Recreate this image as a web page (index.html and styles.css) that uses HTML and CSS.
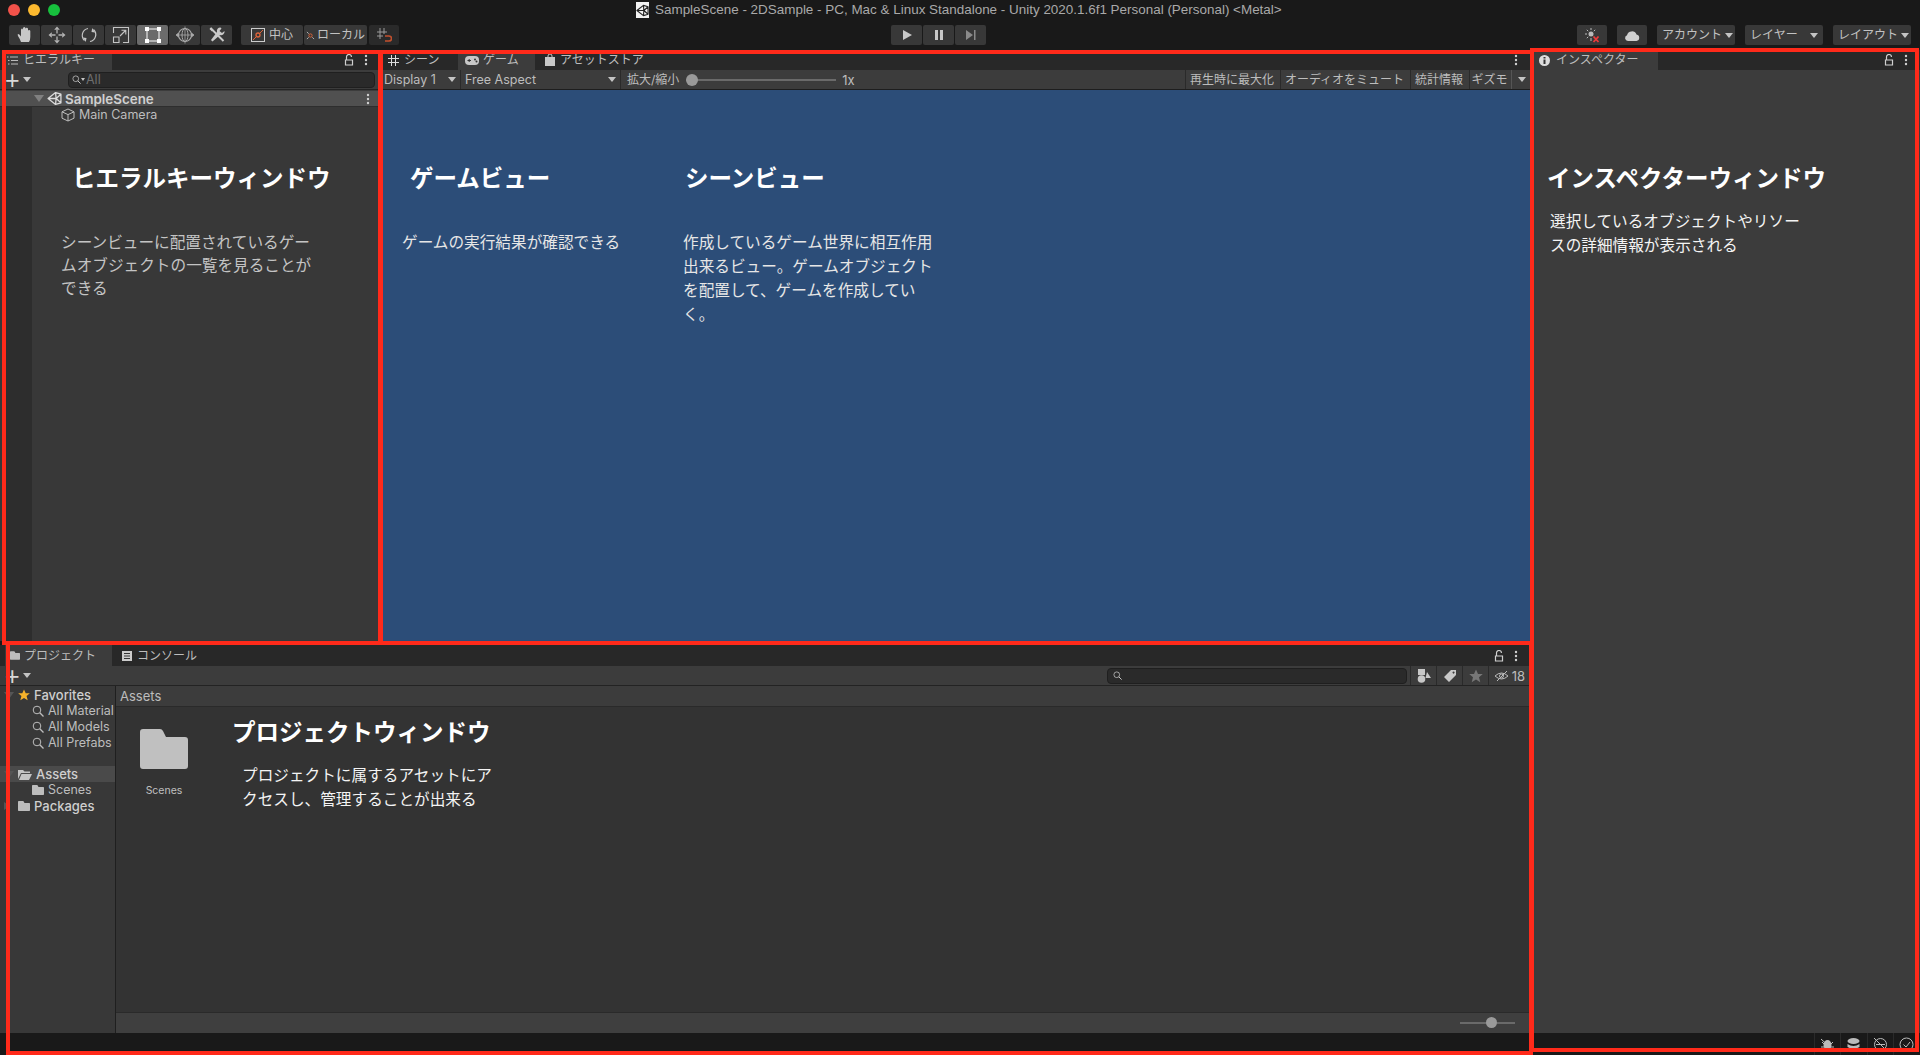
FILE: index.html
```html
<!DOCTYPE html>
<html lang="ja">
<head>
<meta charset="utf-8">
<title>Unity Editor</title>
<link rel="stylesheet" href="styles.css">
</head>
<body>
<svg class="defs" width="0" height="0">
  <symbol id="lock" viewBox="0 0 12 12"><path d="M2.5 6V11H9.5V6ZM3.5 6V3A2.5 2.5 0 0 1 8.500 3" fill="none" stroke="currentColor" stroke-width="1.200"/></symbol>
  <symbol id="dots" viewBox="0 0 4 12"><circle cx="2" cy="2" r="1.200" fill="currentColor"/><circle cx="2" cy="6" r="1.200" fill="currentColor"/><circle cx="2" cy="10" r="1.200" fill="currentColor"/></symbol>
  <symbol id="folder" viewBox="0 0 48 40"><path d="M3 0H20Q22 0 23 2L26 8H45Q48 8 48 11V37Q48 40 45 40H3Q0 40 0 37V3Q0 0 3 0Z" fill="currentColor"/></symbol>
  <symbol id="mag" viewBox="0 0 12 12"><circle cx="5" cy="5" r="3.800" fill="none" stroke="currentColor" stroke-width="1"/><path d="M7.800 7.800L11.500 11.500" stroke="currentColor" stroke-width="1.300"/></symbol>
  <symbol id="unity" viewBox="0 0 14 14"><path d="M1 7L8 1.500L13 3V11L8 12.500ZM1 7H8.500M8.500 7L13 3M8.500 7L13 11M8 1.500L8.500 7L8 12.500" fill="none" stroke="currentColor" stroke-width="1.200" stroke-linejoin="round"/></symbol>
</svg>

<header class="titlebar">
  <div class="lights"><i class="light red"></i><i class="light yellow"></i><i class="light green"></i></div>
  <div class="title">
    <span class="title-icon"><svg width="13" height="13"><use href="#unity"/></svg></span>
    <span>SampleScene - 2DSample - PC, Mac &amp; Linux Standalone - Unity 2020.1.6f1 Personal (Personal) &lt;Metal&gt;</span>
  </div>
</header>

<nav class="toolbar">
  <div class="tgroup">
    <button class="tb tb-tool"><svg width="18" height="18" viewBox="0 0 18 18"><path d="M5 16Q4 13 2 10Q1 8 2.500 8Q4 8.500 5 10.500V4Q5 2.500 6 2.500Q7 2.500 7 4V8V2.500Q7 1 8.200 1Q9.500 1 9.500 2.500V8V3Q9.500 1.800 10.700 1.800Q12 1.800 12 3V8.500V5Q12 4 13 4Q14.300 4 14.300 5V11Q14.300 14 13 16Z" fill="#c8c8c8"/></svg></button>
    <button class="tb tb-tool"><svg width="18" height="18" viewBox="0 0 18 18"><path d="M9 0.500L11.800 3.800H6.200ZM9 17.500L6.200 14.200H11.800ZM0.500 9L3.800 6.200V11.800ZM17.500 9L14.200 11.800V6.200Z" fill="#b4b4b4"/><path d="M9 4V7.500M9 10.500V14M4 9H7.500M10.500 9H14" stroke="#b4b4b4" stroke-width="1.300"/></svg></button>
    <button class="tb tb-tool"><svg width="18" height="18" viewBox="0 0 18 18"><path d="M8 2.500A7 7 0 0 0 4.500 14.500M10 15.500A7 7 0 0 0 13.500 3.500" fill="none" stroke="#c4c4c4" stroke-width="1.200"/><path d="M3 11.500L6.500 12L5.800 16ZM15 6.500L11.500 6L12.200 2Z" fill="#c4c4c4"/></svg></button>
    <button class="tb tb-tool"><svg width="18" height="18" viewBox="0 0 18 18"><path d="M1.500 7V1.500H16.500V16.500H11M1.500 11H7V16.500H1.500ZM8 10L13.500 4.500M9.500 4.200H13.800V8.500" fill="none" stroke="#c4c4c4" stroke-width="1.100"/></svg></button>
    <button class="tb tb-tool active"><svg width="18" height="18" viewBox="0 0 18 18"><path d="M3 2.500V15.500M15 2.500V15.500M2.500 3H15.500M2.500 15H15.500" stroke="#fff" stroke-width="1"/><path d="M1 1H5V5H1ZM13 1H17V5H13ZM1 13H5V17H1ZM13 13H17V17H13Z" fill="#fff"/></svg></button>
    <button class="tb tb-tool"><svg width="20" height="18" viewBox="0 0 20 18"><circle cx="10" cy="9" r="6.500" fill="none" stroke="#aaa" stroke-width="1.100"/><ellipse cx="10" cy="9" rx="3" ry="6.500" fill="none" stroke="#aaa"/><path d="M3.500 9H16.500M10 0.500V17.500M1 9L3.500 7V11ZM19 9L16.500 7V11Z" stroke="#aaa" fill="#aaa" stroke-width="0.800"/></svg></button>
    <button class="tb tb-tool"><svg width="18" height="18" viewBox="0 0 18 18"><path d="M2 15L9 8M12.500 1.500A3.500 3.500 0 0 0 9 6L3 14L4.500 15.500L12 9A3.500 3.500 0 0 0 16.500 5L14 7L11.500 5L13.500 2.500Z" fill="#c8c8c8"/><path d="M2.500 2L5 4.500L15.500 15" stroke="#c8c8c8" stroke-width="2"/><path d="M1.500 3L3 1.500L5.500 4L4 5.500Z" fill="#c8c8c8"/></svg></button>
  </div>
  <div class="tgroup tgroup-handles">
    <button class="tb tb-center"><svg width="14" height="14" viewBox="0 0 14 14"><rect x="0.500" y="0.500" width="13" height="13" fill="none" stroke="#ccc"/><circle cx="7" cy="7" r="2" fill="none" stroke="#e0643a" stroke-width="1.300"/><path d="M8.500 5.500L12 2M2 12L5.500 8.500" stroke="#e0643a"/></svg>中心</button>
    <button class="tb tb-local"><svg width="9" height="9" viewBox="0 0 10 10"><circle cx="5" cy="5" r="1.800" fill="none" stroke="#e0643a"/><path d="M1 1L3 3M9 9L7 7M1 9L3 7" stroke="#bbb"/></svg>ローカル</button>
    <button class="tb tb-snap"><svg width="16" height="16" viewBox="0 0 16 16"><path d="M1 5H11M1 9H7M4 1V12M8 1V7" stroke="#9a9a9a" fill="none"/><path d="M9 9H13A2.500 2.500 0 0 1 13 14H9" fill="none" stroke="#c2502e" stroke-width="1.600"/></svg></button>
  </div>
  <div class="tgroup tgroup-play">
    <button class="tb tb-tool"><svg width="12" height="12" viewBox="0 0 12 12"><path d="M2 1L11 6L2 11Z" fill="#c8c8c8"/></svg></button>
    <button class="tb tb-tool"><svg width="12" height="12" viewBox="0 0 12 12"><path d="M2 1H5V11H2ZM7 1H10V11H7Z" fill="#c8c8c8"/></svg></button>
    <button class="tb tb-tool"><svg width="12" height="12" viewBox="0 0 12 12"><path d="M1 1L8 6L1 11ZM9 1H10.500V11H9Z" fill="#8a8a8a"/></svg></button>
  </div>
  <div class="tgroup tgroup-right">
    <button class="tb tb-sq"><svg width="16" height="16" viewBox="0 0 16 16"><circle cx="7" cy="7" r="2.500" fill="#bbb"/><path d="M7 1V3M7 11V14M1 7H3M2.800 2.800L4.200 4.200M11.200 2.800L9.800 4.200M2.800 11.200L4.200 9.800" stroke="#bbb"/><path d="M9.500 9.500L14.500 15M14.500 9.500L9.500 15" stroke="#f03a3a" stroke-width="1.800"/></svg></button>
    <button class="tb tb-sq"><svg width="16" height="12" viewBox="0 0 16 12"><path d="M4 12A3 3 0 0 1 3 6.200A5 5 0 0 1 12.500 5.500A3.300 3.300 0 0 1 12.500 12Z" fill="#d0d0d0"/></svg></button>
    <button class="tb tb-menu">アカウント<i class="caret"></i></button>
    <button class="tb tb-menu">レイヤー<i class="caret caret-far"></i></button>
    <button class="tb tb-menu">レイアウト<i class="caret"></i></button>
  </div>
</nav>

<main class="workspace">
  <div class="left-col">
    <div class="top-row">
      <section class="panel hier">
        <div class="tabs">
          <div class="tab tab-hier active"><svg class="ic" width="11" height="9" viewBox="0 0 11 9"><path d="M3 1H11M4 4.500H11M4 8H11" stroke="#bbb"/><path d="M0 0.500H1.500V1.500H0ZM1 4H2.500V5H1ZM1 7.500H2.500V8.500H1Z" fill="#bbb"/></svg>ヒエラルキー</div>
          <div class="tab-tools"><svg width="12" height="12"><use href="#lock"/></svg><svg width="4" height="12"><use href="#dots"/></svg></div>
        </div>
        <div class="bar hier-bar">
          <span class="plus">+</span><i class="caret"></i>
          <div class="search hier-search"><svg width="9" height="9"><use href="#mag"/></svg><i class="caret caret-mini"></i><span>All</span></div>
        </div>
        <div class="scene-row">
          <i class="caret caret-big"></i>
          <svg class="unity-ic" width="15" height="15"><use href="#unity"/></svg>
          <b>SampleScene</b>
          <svg class="row-dots" width="4" height="12"><use href="#dots"/></svg>
        </div>
        <div class="hier-body">
          <div class="gutter"></div>
          <div class="obj-row"><svg width="14" height="14" viewBox="0 0 14 14"><path d="M7 1L13 3.800V10.200L7 13L1 10.200V3.800ZM1 3.800L7 6.600L13 3.800M7 6.600V13" fill="none" stroke="#bdbdbd"/></svg>Main Camera</div>
        </div>
      </section>

      <section class="panel game">
        <div class="tabs">
          <div class="tab tab-scene"><svg class="ic" width="11" height="11" viewBox="0 0 11 11"><path d="M3.500 0V11M7.500 0V11M0 3.500H11M0 7.500H11" stroke="#ddd"/></svg>シーン</div>
          <div class="tab tab-game active"><svg class="ic" width="14" height="9" viewBox="0 0 14 9"><rect width="14" height="9" rx="4" fill="#c8c8c8"/><path d="M2.500 4.500H6M4.200 3V6" stroke="#333"/><circle cx="10" cy="3.500" r="1" fill="#333"/><circle cx="11.500" cy="5.500" r="1" fill="#333"/></svg>ゲーム</div>
          <div class="tab tab-store"><svg class="ic" width="10" height="12" viewBox="0 0 10 12"><path d="M0 3H10V12H0Z" fill="#c8c8c8"/><path d="M3 3V2A2 2 0 0 1 7 2V3" fill="none" stroke="#c8c8c8"/></svg>アセットストア</div>
          <div class="tab-tools"><svg width="4" height="12"><use href="#dots"/></svg></div>
        </div>
        <div class="bar game-bar">
          <div class="cell cell-display">Display 1<i class="caret"></i></div>
          <div class="cell cell-aspect">Free Aspect<i class="caret"></i></div>
          <div class="cell cell-scale">拡大/縮小<span class="slider game-slider"><i class="knob"></i></span><span class="scale-val">1x</span></div>
          <div class="cell cell-btn cell-max">再生時に最大化</div>
          <div class="cell cell-btn cell-mute">オーディオをミュート</div>
          <div class="cell cell-btn cell-stat">統計情報</div>
          <div class="cell cell-btn cell-giz">ギズモ</div>
          <div class="cell cell-arrow"><i class="caret"></i></div>
        </div>
        <div class="viewport"></div>
      </section>
    </div>

    <section class="panel project">
      <div class="tabs tabs-proj">
        <div class="tab tab-proj active"><svg class="ic" width="10" height="9"><use href="#folder"/></svg>プロジェクト</div>
        <div class="tab tab-console"><svg class="ic" width="10" height="10" viewBox="0 0 10 10"><path d="M0 0H10V10H0Z" fill="#ccc"/><path d="M2 2.500H8M2 5H8M2 7.500H8" stroke="#333"/></svg>コンソール</div>
        <div class="tab-tools"><svg width="12" height="12"><use href="#lock"/></svg><svg width="4" height="12"><use href="#dots"/></svg></div>
      </div>
      <div class="bar proj-bar">
        <span class="plus">+</span><i class="caret"></i>
        <div class="search proj-search"><svg width="9" height="9"><use href="#mag"/></svg></div>
        <div class="pcell"><svg width="14" height="14" viewBox="0 0 14 14"><path d="M1 0H8V6H1Z" fill="#c8c8c8"/><circle cx="4.500" cy="10" r="3.800" fill="#c8c8c8"/><path d="M10 3L14 9H8.500Z" fill="#c8c8c8"/></svg></div>
        <div class="pcell"><svg width="14" height="14" viewBox="0 0 14 14"><path d="M8 1H13V6L6 13L1 8ZM10.500 2.500A1 1 0 1 0 10.600 2.500Z" fill="#c8c8c8"/></svg></div>
        <div class="pcell"><svg width="14" height="14" viewBox="0 0 14 14"><path d="M7 0.500L9 5H13.800L10 8.200L11.300 13.200L7 10.500L2.700 13.200L4 8.200L0.200 5H5Z" fill="#777"/></svg></div>
        <div class="pcell pcell-hidden"><svg width="15" height="12" viewBox="0 0 15 12"><path d="M1 6Q7.500 0 14 6Q7.500 12 1 6ZM3 11L13 1" fill="none" stroke="#bbb"/><circle cx="7.500" cy="6" r="2" fill="none" stroke="#bbb"/></svg>18</div>
      </div>
      <div class="proj-main">
        <aside class="tree">
          <div class="trow trow-fav"><i class="caret caret-dim"></i><svg width="12" height="12" viewBox="0 0 14 14"><path d="M7 0.500L9 5H13.800L10 8.200L11.300 13.200L7 10.500L2.700 13.200L4 8.200L0.200 5H5Z" fill="#f5b32b"/></svg><b>Favorites</b></div>
          <div class="trow trow-sub"><svg width="12" height="12"><use href="#mag"/></svg>All Material</div>
          <div class="trow trow-sub"><svg width="12" height="12"><use href="#mag"/></svg>All Models</div>
          <div class="trow trow-sub"><svg width="12" height="12"><use href="#mag"/></svg>All Prefabs</div>
          <div class="trow trow-assets"><i class="caret caret-dim"></i><svg width="14" height="11" viewBox="0 0 14 11"><path d="M0 1H5L6.500 2.500H12V4H3L0 10ZM3.500 5H14L11 11H1Z" fill="#c4c4c4"/></svg><b>Assets</b></div>
          <div class="trow trow-sub"><svg width="12" height="10"><use href="#folder"/></svg>Scenes</div>
          <div class="trow trow-pack"><i class="caret caret-side"></i><svg width="12" height="10"><use href="#folder"/></svg><b>Packages</b></div>
        </aside>
        <div class="browser">
          <div class="crumb">Assets</div>
          <div class="files">
            <div class="file"><svg width="48" height="40"><use href="#folder"/></svg><span>Scenes</span></div>
          </div>
          <div class="proj-foot"><span class="slider foot-slider"><i class="knob"></i></span></div>
        </div>
      </div>
    </section>
  </div>

  <section class="panel inspector">
    <div class="tabs">
      <div class="tab tab-insp active"><svg class="ic" width="11" height="11" viewBox="0 0 11 11"><circle cx="5.500" cy="5.500" r="5.500" fill="#ddd"/><path d="M4.500 2H6.500V3.500H4.500ZM4.500 4.500H6.500V9H4.500Z" fill="#333"/></svg>インスペクター</div>
      <div class="tab-tools"><svg width="12" height="12"><use href="#lock"/></svg><svg width="4" height="12"><use href="#dots"/></svg></div>
    </div>
    <div class="insp-body"></div>
  </section>
</main>

<footer class="status">
  <div class="stat-cell"><svg width="15" height="15" viewBox="0 0 15 15"><ellipse cx="7.500" cy="8" rx="4" ry="5" fill="#bbb"/><path d="M1 2L14 14M2 5L4 7M13 5L11 7M1 10H4M14 10H11" stroke="#bbb"/></svg></div>
  <div class="stat-cell"><svg width="15" height="15" viewBox="0 0 15 15"><ellipse cx="7.500" cy="4" rx="6" ry="3" fill="#bbb"/><path d="M1.500 7Q7.500 11 13.500 7V10Q7.500 14 1.500 10Z" fill="#bbb"/></svg></div>
  <div class="stat-cell"><svg width="15" height="15" viewBox="0 0 15 15"><circle cx="7.500" cy="7.500" r="6" fill="none" stroke="#bbb"/><path d="M1 1L14 14M3 7.500H12" stroke="#bbb"/></svg></div>
  <div class="stat-cell"><svg width="15" height="15" viewBox="0 0 15 15"><circle cx="7.500" cy="7.500" r="6.500" fill="none" stroke="#bbb"/><path d="M4.500 7.500L7 10L11 5" fill="none" stroke="#bbb"/></svg></div>
</footer>

<div class="frame frame-hier"></div>
<div class="frame frame-game"></div>
<div class="frame frame-proj"></div>
<div class="frame frame-insp"></div>

<h2 class="note-h nh-hier">ヒエラルキーウィンドウ</h2>
<p class="note-p np-hier">シーンビューに配置されているゲー<br>ムオブジェクトの一覧を見ることが<br>できる</p>
<h2 class="note-h nh-game">ゲームビュー</h2>
<p class="note-p np-game">ゲームの実行結果が確認できる</p>
<h2 class="note-h nh-scene">シーンビュー</h2>
<p class="note-p np-scene">作成しているゲーム世界に相互作用<br>出来るビュー。ゲームオブジェクト<br>を配置して、ゲームを作成してい<br>く。</p>
<h2 class="note-h nh-insp">インスペクターウィンドウ</h2>
<p class="note-p np-insp">選択しているオブジェクトやリソー<br>スの詳細情報が表示される</p>
<h2 class="note-h nh-proj">プロジェクトウィンドウ</h2>
<p class="note-p np-proj">プロジェクトに属するアセットにア<br>クセスし、管理することが出来る</p>
</body>
</html>
```

FILE: styles.css
```css
* { box-sizing: border-box; }
html, body { margin: 0; height: 100%; }
body {
  width: 1920px;
  height: 1055px;
  overflow: hidden;
  position: relative;
  display: flex;
  flex-direction: column;
  background: #191919;
  color: #bdbdbd;
  font: 12px/16px Inter, "Noto Sans CJK JP", sans-serif;
}
.defs { position: absolute; }
svg { display: block; flex: none; }
i { display: block; }
button { font: inherit; color: inherit; border: 0; padding: 0; }

/* title bar */
.titlebar { height: 20px; flex: none; display: flex; align-items: center; position: relative; }
.lights { display: flex; gap: 8px; padding-left: 8px; }
.light { width: 12px; height: 12px; border-radius: 50%; }
.red { background: #f2524a; }
.yellow { background: #fcb92f; }
.green { background: #17c03d; }
.title {
  flex: 1;
  margin-left: 576px;
  display: flex;
  align-items: center;
  gap: 6px;
  color: #a9a9a9;
  font-family: "Liberation Sans", sans-serif;
  font-size: 13.450px;
}
.title-icon { width: 13px; height: 16px; background: #f2f2f2; color: #222; display: flex; align-items: center; }

/* toolbar */
.toolbar { height: 30px; flex: none; display: flex; padding: 5px 0 5px 9px; }
.tgroup { display: flex; gap: 1px; }
.tgroup-handles { margin-left: 9px; }
.tgroup-play { margin-left: 492px; }
.tgroup-right { margin-left: 591px; gap: 10px; }
.tb {
  height: 20px;
  background: #383838;
  border-radius: 2px;
  display: flex;
  align-items: center;
  justify-content: center;
  color: #c2c2c2;
  white-space: nowrap;
}
.tb-tool { width: 31px; }
.tb-tool.active { background: #6b6b6b; }
.tb-sq { width: 30px; }
.tb-center { width: 62px; gap: 4px; }
.tb-local { width: 63px; gap: 2px; }
.tb-snap { width: 30px; margin-left: 1px; background: #2a2a2a; }
.tb-menu { width: 78px; padding: 0 2px 0 5px; justify-content: space-between; }
.caret { width: 0; height: 0; border: 4px solid transparent; border-top: 5px solid #c4c4c4; border-bottom: 0; flex: none; }
.caret-far { margin-right: 3px; }
.caret-mini { border-width: 2px; border-top-width: 3px; border-bottom: 0; }
.caret-big { border-width: 5px; border-top: 7px solid #808080; border-bottom: 0; }
.caret-dim { border-top-color: #555; border-left-width: 5px; border-right-width: 5px; border-top-width: 7px; }
.caret-side { border: 4px solid transparent; border-left: 6px solid #555; border-right: 0; margin-left: 1px; margin-right: 4px; }

/* layout */
.workspace { flex: 1; min-height: 0; display: flex; }
.left-col { width: 1530px; flex: none; display: flex; flex-direction: column; gap: 4px; }
.top-row { height: 591px; flex: none; display: flex; gap: 2px; }
.panel { display: flex; flex-direction: column; min-width: 0; background: #3c3c3c; }
.hier { width: 380px; flex: none; }
.game { flex: 1; }
.project { flex: 1; min-height: 0; }
.inspector { flex: 1; margin-left: 2px; }

/* tabs */
.tabs { height: 20px; flex: none; display: flex; background: #282828; padding-left: 5px; }
.tabs-proj { height: 21px; }
.tab { display: flex; align-items: center; height: 100%; white-space: nowrap; }
.tab.active { background: #3c3c3c; }
.ic { margin-right: 5px; }
.tab-hier { width: 107px; padding-left: 2px; }
.tab-hier .ic { margin-right: 5px; }
.tab-scene { width: 76px; margin-left: -5px; padding-left: 6px; }
.tab-game { width: 77px; padding-left: 7px; }
.tab-game .ic { margin-right: 4px; }
.tab-store { padding-left: 10px; }
.tab-proj { width: 107px; padding-left: 5px; }
.tab-proj .ic { margin-right: 4px; }
.tab-console { padding-left: 10px; }
.tab-insp { width: 124px; padding-left: 5px; margin-left: -3px; }
.tab-insp .ic { margin-right: 6px; }
.tab-tools { margin-left: auto; display: flex; align-items: center; gap: 9px; padding-right: 12px; color: #cfcfcf; }

/* bars */
.bar { height: 20px; flex: none; display: flex; align-items: center; background: #3c3c3c; border-bottom: 1px solid #232323; }
.plus { font: 400 25px/20px "Liberation Sans", sans-serif; color: #d8d8d8; margin: 0 3px 0 5px; }
.search {
  height: 16px;
  background: #2a2a2a;
  border: 1px solid #1f1f1f;
  border-radius: 4px;
  display: flex;
  align-items: center;
  padding-left: 5px;
  color: #c8c8c8;
}
.hier-search { width: 307px; margin-left: auto; margin-right: 5px; padding-left: 3px; }
.hier-search span { color: #6e6e6e; margin-left: 1px; font-size: 12.500px; }
.proj-search { width: 300px; margin-left: auto; margin-right: 3px; }

/* hierarchy */
.scene-row {
  height: 16px;
  flex: none;
  margin-top: 1px;
  background: #505050;
  display: flex;
  align-items: center;
  padding-left: 34px;
  color: #d0d0d0;
  border-bottom: 1px solid #2e2e2e;
}
.scene-row b { margin-left: 3px; font-size: 13.400px; font-weight: 600; }
.unity-ic { margin-left: 3px; color: #dcdcdc; }
.row-dots { margin-left: auto; margin-right: 10px; color: #cfcfcf; }
.hier-body { flex: 1; display: flex; background: #383838; padding-left: 5px; }
.gutter { width: 27px; background: #2d2d2d; }
.obj-row { height: 16px; display: flex; align-items: center; gap: 4px; padding-left: 29px; font-size: 12.500px; }

/* game */
.game-bar { border-bottom-color: #1e1e1e; }
.cell { height: 100%; display: flex; align-items: center; white-space: nowrap; border-right: 1px solid #2a2a2a; }
.cell .caret { margin-left: auto; margin-right: 4px; }
.cell-display { width: 79px; padding-left: 2px; font-size: 12.500px; }
.cell-aspect { width: 160px; padding-left: 4px; font-size: 12.500px; }
.cell-scale { width: 564px; padding-left: 6px; border-right: 0; border-left: 0; }
.cell-btn { justify-content: center; border-left: 1px solid #2a2a2a; border-right: 0; padding-right: 2px; }
.cell-max { width: 95px; }
.cell-mute { width: 130px; }
.cell-stat { width: 59px; }
.cell-giz { width: 42px; }
.cell-arrow { flex: 1; border-right: 0; border-left: 1px solid #555; }
.slider { display: block; height: 2px; background: #6a6a6a; position: relative; }
.knob { position: absolute; width: 12px; height: 12px; top: -5px; background: #999; border-radius: 50%; }
.game-slider { width: 150px; margin-left: 7px; }
.game-slider .knob { left: 0; }
.scale-val { margin-left: 6px; font-size: 13px; }
.viewport { flex: 1; background: #2c4d78; }

/* project */
.pcell { width: 26px; height: 100%; flex: none; display: flex; align-items: center; justify-content: center; border-left: 1px solid #2a2a2a; }
.pcell-hidden { width: 42px; gap: 3px; font-size: 13px; }
.proj-main { flex: 1; min-height: 0; display: flex; background: #333; }
.tree { width: 116px; flex: none; padding-top: 1px; border-right: 1px solid #1f1f1f; background: #383838; color: #bdbdbd; font-size: 12.500px; }
.trow { height: 16px; display: flex; align-items: center; white-space: nowrap; overflow: hidden; padding-left: 5px; gap: 4px; }
.trow b { font-weight: 500; color: #cfcfcf; font-size: 13px; }
.trow-sub { padding-left: 32px; gap: 4px; }
.trow-fav { padding-left: 4px; }
.trow-assets { margin-top: 15px; background: #4a4a4a; padding-left: 4px; }
.trow-pack { padding-left: 3px; }
.browser { flex: 1; min-width: 0; display: flex; flex-direction: column; }
.crumb { height: 21px; flex: none; padding-left: 4px; display: flex; align-items: center; background: #3c3c3c; border-bottom: 1px solid #2a2a2a; font-size: 13px; }
.files { flex: 1; padding: 22px 0 0 24px; }
.file { width: 48px; display: flex; flex-direction: column; align-items: center; gap: 15px; color: #c0c0c0; font-size: 10.500px; line-height: 14px; }
.proj-foot { height: 21px; flex: none; background: #3f3f3f; border-top: 1px solid #2a2a2a; display: flex; align-items: center; justify-content: flex-end; padding-right: 15px; }
.foot-slider { width: 55px; }
.foot-slider .knob { left: 26px; width: 11px; height: 11px; background: #9a9a9a; }

/* inspector */
.insp-body { flex: 1; background: #3c3c3c; }

/* status */
.status { height: 22px; flex: none; display: flex; justify-content: flex-end; padding-right: 6px; }
.stat-cell { width: 26.500px; height: 100%; padding: 4px 0 0 5px; border-left: 1px solid #2a2a2a; }
.stat-cell:last-child { width: 21px; }

/* red annotation frames */
.frame { position: absolute; border: 4px solid #ff2a1a; }
.frame-hier { left: 2px; top: 50px; width: 381px; height: 595px; }
.frame-game { left: 378px; top: 50px; width: 1156px; height: 595px; }
.frame-proj { left: 6px; top: 641px; width: 1527px; height: 414px; }
.frame-insp { left: 1530px; top: 48px; width: 389px; height: 1004px; }

/* annotation text */
.note-h, .note-p { position: absolute; margin: 0; font-family: "Noto Sans CJK JP", sans-serif; white-space: nowrap; }
.note-h { font-size: 23.500px; line-height: 30px; font-weight: 700; color: #fff; top: 162px; }
.note-p { font-size: 15.650px; line-height: 24px; top: 230px; color: #e6e6e6; }
.nh-hier { left: 72px; }
.np-hier { left: 61px; line-height: 23px; color: #c4c4c4; }
.nh-game { left: 410px; }
.np-game { left: 402px; }
.nh-scene { left: 685px; }
.np-scene { left: 683px; }
.nh-insp { left: 1547px; }
.np-insp { left: 1550px; top: 209px; color: #f4f4f4; }
.nh-proj { left: 232px; top: 716px; }
.np-proj { left: 242px; top: 763px; color: #f4f4f4; }
```
